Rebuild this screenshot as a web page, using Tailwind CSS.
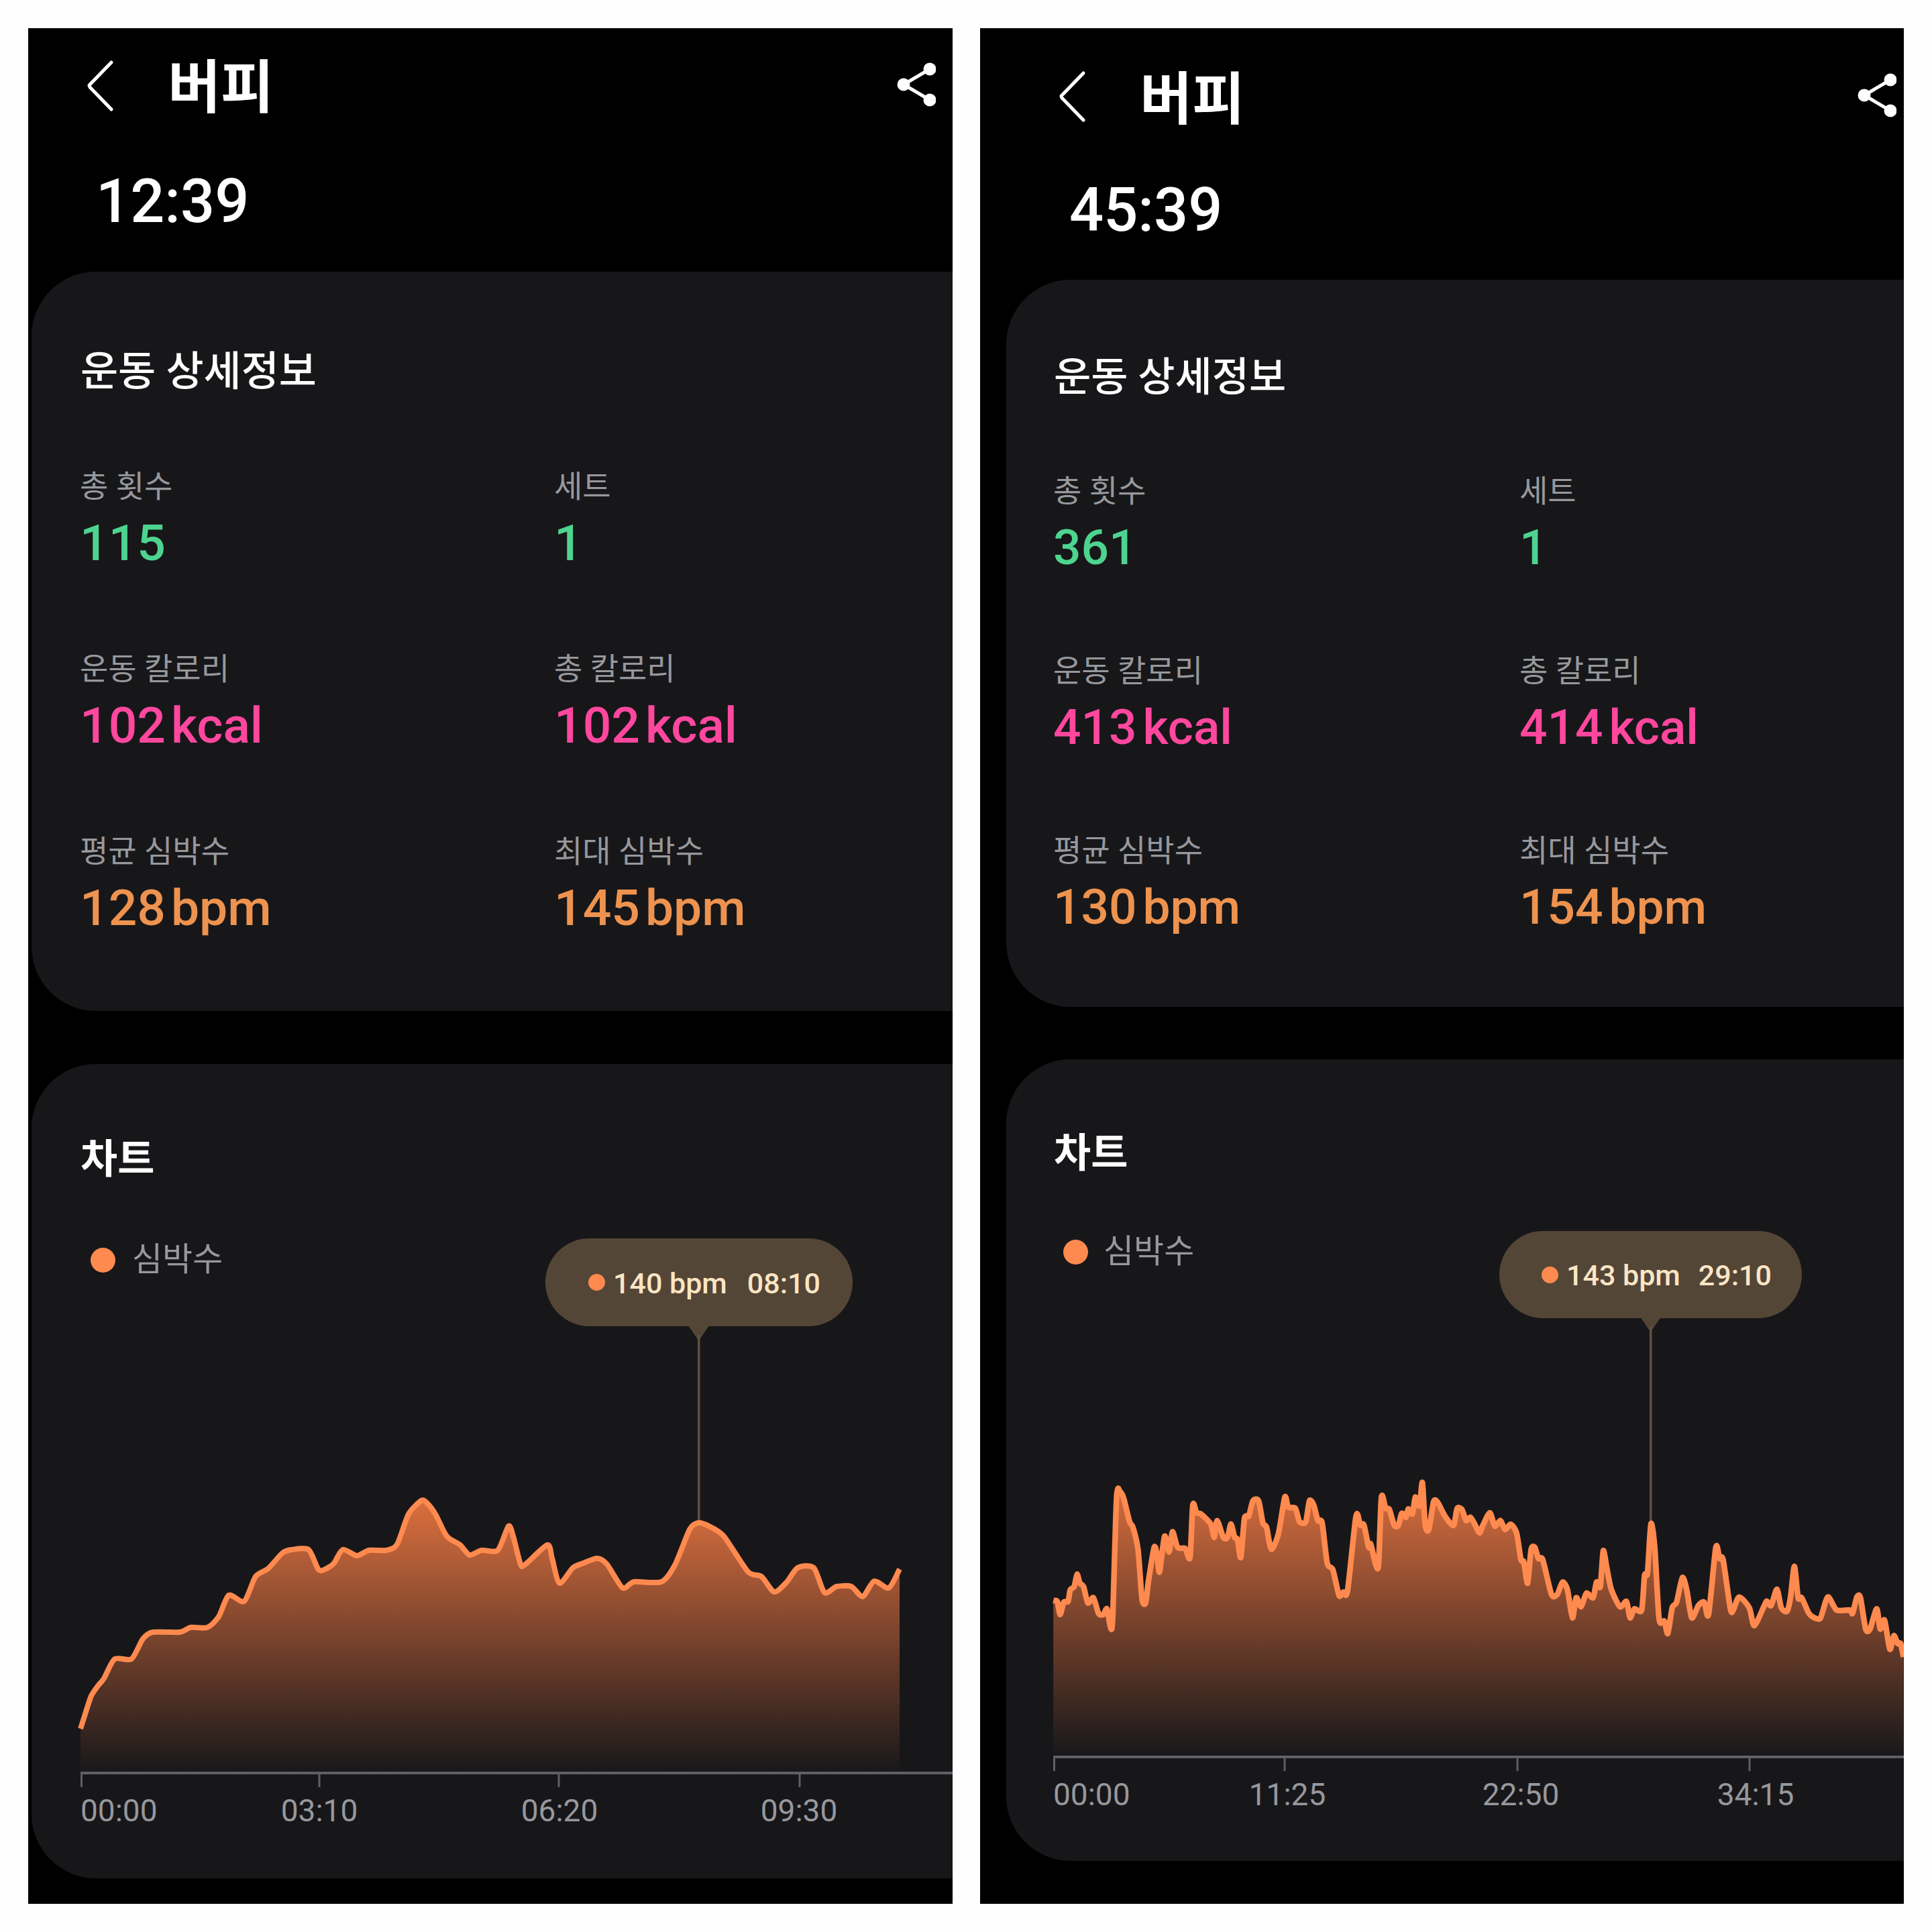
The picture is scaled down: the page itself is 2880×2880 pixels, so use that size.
<!DOCTYPE html>
<html lang="ko">
<head>
  <meta charset="UTF-8">
  <title>버피</title>
  <script src="https://cdn.jsdelivr.net/npm/@tailwindcss/browser@4"></script>
</head>
<body class="w-[2880px] h-[2880px] bg-[#fefefe] font-['Roboto','Noto_Sans_CJK_KR',sans-serif] flex pt-[42px] pl-[42px]">

  <!-- left screen -->
  <div class="w-[1378px] h-[2796px] bg-black overflow-hidden flex flex-col text-white">
    <div class="h-[180px] flex items-center pl-[88px] pr-[25px]">
      <svg class="w-[40px] h-[76px] mb-[8px]" viewBox="0 0 40 76" fill="none" stroke="white" stroke-width="5" stroke-linecap="round" stroke-linejoin="round"><path d="M36 3 L3 37 Q3 38 4 40 L36 73"/></svg>
      <div class="ml-[80px] text-[86px] font-semibold leading-none">버피</div>
      <svg class="ml-auto w-[58px] h-[66px] mb-[12px]" viewBox="0 0 58 66" fill="white" stroke="white" stroke-width="5"><path d="M49 10 L10 33 L49 56" fill="none"/><circle cx="49" cy="10" r="7"/><circle cx="10" cy="33" r="7"/><circle cx="49" cy="56" r="7"/></svg>
    </div>
    <div class="pl-[101px] text-[90px] font-medium leading-[158px]">12:39</div>

    <div class="mt-[25px] ml-[5px] h-[1102px] shrink-0 bg-[#17171a] rounded-l-[96px] pt-[109px] pl-[73px]">
      <div class="text-[61px] font-medium leading-[80px]">운동 상세정보</div>
      <div class="mt-[101px] -ml-[1px] grid grid-cols-[707px_1fr] gap-y-[104px]">
        <div><div class="text-[46px] leading-[60px] text-[#97989c]">총 횟수</div><div class="text-[75px] font-medium leading-[108px] text-[#4dd48f]">115</div></div>
        <div><div class="text-[46px] leading-[60px] text-[#97989c]">세트</div><div class="text-[75px] font-medium leading-[108px] text-[#4dd48f]">1</div></div>
        <div><div class="text-[46px] leading-[60px] text-[#97989c]">운동 칼로리</div><div class="text-[75px] font-medium leading-[108px] text-[#ff479e] flex gap-[8px]"><span>102</span><span>kcal</span></div></div>
        <div><div class="text-[46px] leading-[60px] text-[#97989c]">총 칼로리</div><div class="text-[75px] font-medium leading-[108px] text-[#ff479e] flex gap-[8px]"><span>102</span><span>kcal</span></div></div>
        <div><div class="text-[46px] leading-[60px] text-[#97989c]">평균 심박수</div><div class="text-[75px] font-medium leading-[108px] text-[#ed934f] flex gap-[8px]"><span>128</span><span>bpm</span></div></div>
        <div><div class="text-[46px] leading-[60px] text-[#97989c]">최대 심박수</div><div class="text-[75px] font-medium leading-[108px] text-[#ed934f] flex gap-[8px]"><span>145</span><span>bpm</span></div></div>
      </div>
    </div>

    <div class="mt-[79px] ml-[5px] h-[1214px] shrink-0 bg-[#17171a] rounded-l-[96px] pt-[103px]">
      <div class="pl-[73px] text-[60px] font-semibold leading-[80px]">차트</div>
      <div class="mt-[78px] relative h-[953px]">
        <svg id="chartA" class="absolute inset-0 w-[1373px] h-[953px]" viewBox="47 1847 1373 953"></svg>
        <div class="relative top-[1px] flex items-center pl-[88px] gap-[25px] h-[60px]">
          <span class="w-[37px] h-[37px] rounded-full bg-[#ff8a4f]"></span>
          <span class="text-[49px] leading-[60px] text-[#97989c]">심박수</span>
        </div>
        <div class="absolute left-[766px] top-[-1px] w-[458px] h-[131px] rounded-full bg-[#544636] flex items-center pl-[64px] text-[43px] font-medium text-[#fbe5c5]">
          <span class="w-[25px] h-[25px] rounded-full bg-[#ff8a4f]"></span>
          <span class="ml-[12px] mt-[4px]">140 bpm</span>
          <span class="ml-[30px] mt-[4px]">08:10</span>
        </div>
        <span class="absolute left-[73px] top-[828px] text-[46px] leading-[48px] text-[#97989c]">00:00</span>
        <span class="absolute left-[429px] top-[828px] -translate-x-1/2 text-[46px] leading-[48px] text-[#97989c]">03:10</span>
        <span class="absolute left-[787px] top-[828px] -translate-x-1/2 text-[46px] leading-[48px] text-[#97989c]">06:20</span>
        <span class="absolute left-[1144px] top-[828px] -translate-x-1/2 text-[46px] leading-[48px] text-[#97989c]">09:30</span>
      </div>
    </div>
  </div>

  <!-- right screen -->
  <div class="ml-[41px] w-[1377px] h-[2796px] bg-black overflow-hidden flex flex-col text-white">
    <div class="h-[214px] flex items-center pl-[118px] pr-[11px]">
      <svg class="w-[40px] h-[76px] mb-[10px]" viewBox="0 0 40 76" fill="none" stroke="white" stroke-width="5" stroke-linecap="round" stroke-linejoin="round"><path d="M36 3 L3 37 Q3 38 4 40 L36 73"/></svg>
      <div class="ml-[80px] text-[85px] font-semibold leading-none">버피</div>
      <svg class="ml-auto w-[58px] h-[66px] mb-[15px]" viewBox="0 0 58 66" fill="white" stroke="white" stroke-width="5"><path d="M49 10 L10 33 L49 56" fill="none"/><circle cx="49" cy="10" r="7"/><circle cx="10" cy="33" r="7"/><circle cx="49" cy="56" r="7"/></svg>
    </div>
    <div class="pl-[133px] text-[90px] font-medium leading-[116px]">45:39</div>

    <div class="mt-[45px] ml-[39px] h-[1084px] shrink-0 bg-[#17171a] rounded-l-[96px] pt-[106px] pl-[71px]">
      <div class="text-[60px] font-medium leading-[80px]">운동 상세정보</div>
      <div class="mt-[99px] -ml-[1px] grid grid-cols-[695px_1fr] gap-y-[100px]">
        <div><div class="text-[46px] leading-[60px] text-[#97989c]">총 횟수</div><div class="text-[73px] font-medium leading-[108px] text-[#4dd48f]">361</div></div>
        <div><div class="text-[46px] leading-[60px] text-[#97989c]">세트</div><div class="text-[73px] font-medium leading-[108px] text-[#4dd48f]">1</div></div>
        <div><div class="text-[46px] leading-[60px] text-[#97989c]">운동 칼로리</div><div class="text-[73px] font-medium leading-[108px] text-[#ff479e] flex gap-[9px]"><span>413</span><span>kcal</span></div></div>
        <div><div class="text-[46px] leading-[60px] text-[#97989c]">총 칼로리</div><div class="text-[73px] font-medium leading-[108px] text-[#ff479e] flex gap-[9px]"><span>414</span><span>kcal</span></div></div>
        <div><div class="text-[46px] leading-[60px] text-[#97989c]">평균 심박수</div><div class="text-[73px] font-medium leading-[108px] text-[#ed934f] flex gap-[9px]"><span>130</span><span>bpm</span></div></div>
        <div><div class="text-[46px] leading-[60px] text-[#97989c]">최대 심박수</div><div class="text-[73px] font-medium leading-[108px] text-[#ed934f] flex gap-[9px]"><span>154</span><span>bpm</span></div></div>
      </div>
    </div>

    <div class="mt-[78px] ml-[39px] h-[1195px] shrink-0 bg-[#17171a] rounded-l-[96px] pt-[101px]">
      <div class="pl-[71px] text-[60px] font-semibold leading-[80px]">차트</div>
      <div class="mt-[75px] relative h-[939px]">
        <svg id="chartB" class="absolute inset-0 w-[1338px] h-[939px]" viewBox="1500 1835 1338 939"></svg>
        <div class="relative top-[1px] flex items-center pl-[85px] gap-[23px] h-[60px]">
          <span class="w-[37px] h-[37px] rounded-full bg-[#ff8a4f]"></span>
          <span class="text-[49px] leading-[60px] text-[#97989c]">심박수</span>
        </div>
        <div class="absolute left-[735px] top-[0px] w-[451px] h-[130px] rounded-full bg-[#544636] flex items-center pl-[63px] text-[43px] font-medium text-[#fbe5c5]">
          <span class="w-[25px] h-[25px] rounded-full bg-[#ff8a4f]"></span>
          <span class="ml-[12px] mt-[2px]">143 bpm</span>
          <span class="ml-[27px] mt-[2px]">29:10</span>
        </div>
        <span class="absolute left-[70px] top-[816px] text-[46px] leading-[48px] text-[#97989c]">00:00</span>
        <span class="absolute left-[419px] top-[816px] -translate-x-1/2 text-[46px] leading-[48px] text-[#97989c]">11:25</span>
        <span class="absolute left-[767px] top-[816px] -translate-x-1/2 text-[46px] leading-[48px] text-[#97989c]">22:50</span>
        <span class="absolute left-[1117px] top-[816px] -translate-x-1/2 text-[46px] leading-[48px] text-[#97989c]">34:15</span>
      </div>
    </div>
  </div>

  <script>
    // heart rate traces, read off the screenshots in page coordinates
    const traceA = [[120,2577],[127,2555],[136,2528],[146,2513],[155,2502],[171,2473],[196,2473],[213,2443],[228,2433],[268,2433],[284,2426],[309,2426],[326,2410],[341,2378],[364,2387],[381,2350],[400,2338],[421,2315],[435,2310],[460,2310],[475,2340],[487,2338],[498,2330],[511,2310],[532,2319],[550,2311],[576,2311],[592,2302],[609,2257],[628,2237],[636,2240],[649,2257],[666,2290],[686,2303],[700,2318],[718,2311],[742,2311],[758,2275],[765,2290],[776,2332],[783,2332],[816,2303],[823,2323],[834,2360],[854,2337],[870,2330],[890,2323],[905,2332],[928,2367],[945,2358],[986,2358],[1006,2333],[1028,2280],[1041,2270],[1057,2275],[1079,2290],[1115,2343],[1135,2350],[1154,2373],[1173,2358],[1189,2337],[1213,2337],[1229,2374],[1247,2365],[1269,2365],[1286,2380],[1303,2357],[1325,2367],[1341,2339]];

    const rawB1 = [[48,708],[62,712],[72,770],[85,715],[100,712],[108,660],[122,645],[132,590],[142,630],[155,645],[170,718],[190,695],[208,765],[225,770],[238,745],[250,825],[258,790],[272,245],[285,222],[297,250],[318,355],[330,380],[348,480],[362,700],[375,718],[385,620],[405,470],[415,500],[424,580],[442,420],[458,490],[470,400],[488,470],[515,475],[532,515],[542,280],[555,315],[570,320],[605,365],[618,425],[628,350],[650,425],[665,425],[677,365],[690,425],[700,435],[712,515],[725,340],[740,330],[755,262],[775,262],[790,360],[803,380],[820,478],[845,410],[868,245],[880,290],[905,295],[920,355],[942,355],[955,262],[970,280],[985,350],[1000,360],[1018,540],[1038,570],[1060,685],[1075,670],[1090,665],[1120,330],[1135,370],[1148,370],[1165,470],[1172,455],[1190,548],[1200,545],[1210,245],[1225,295],[1238,300],[1255,370],[1270,372],[1282,318],[1297,335],[1305,298],[1320,320],[1330,245],[1345,285],[1355,180],[1365,370],[1378,390],[1395,265],[1410,270],[1435,330],[1465,372],[1478,297],[1495,300],[1510,350],[1525,335],[1540,365],[1557,405]];
    const rawB2 = [[23,375],[48,315],[65,375],[85,350],[100,390],[120,367],[140,405],[155,525],[165,535],[178,630],[190,480],[203,470],[215,520],[230,525],[260,680],[280,680],[298,625],[315,660],[332,785],[345,695],[362,735],[380,675],[403,695],[415,625],[428,645],[438,485],[450,560],[465,655],[495,735],[518,712],[530,785],[545,745],[570,750],[580,595],[590,585],[602,365],[615,470],[630,790],[648,800],[660,855],[675,740],[690,715],[710,605],[725,660],[742,785],[765,730],[785,715],[800,770],[825,470],[838,520],[850,525],[875,745],[885,750],[905,692],[940,740],[957,820],[990,735],[1000,710],[1015,730],[1035,657],[1050,740],[1070,755],[1082,690],[1095,555],[1108,695],[1120,695],[1145,765],[1165,785],[1185,785],[1210,692],[1240,750],[1285,750],[1295,765],[1310,692],[1322,695],[1340,835],[1355,835],[1378,745],[1390,835],[1405,795],[1423,925],[1437,865],[1450,900],[1460,900],[1470,960]];
    const traceB = [
      ...rawB1.map(([x, y]) => [1550 + x / 2.376, 2150 + y / 3]),
      ...rawB2.map(([x, y]) => [2200 + x / 2.306, 2150 + y / 3])
    ];

    function smooth(pts) {
      let d = `M${pts[0][0]} ${pts[0][1]}`;
      for (let i = 0; i < pts.length - 1; i++) {
        const p0 = pts[i - 1] || pts[i], p1 = pts[i], p2 = pts[i + 1], p3 = pts[i + 2] || p2;
        const c1 = [p1[0] + (p2[0] - p0[0]) / 8, p1[1] + (p2[1] - p0[1]) / 8];
        const c2 = [p2[0] - (p3[0] - p1[0]) / 8, p2[1] - (p3[1] - p1[1]) / 8];
        d += ` C${c1[0]} ${c1[1]} ${c2[0]} ${c2[1]} ${p2[0]} ${p2[1]}`;
      }
      return d;
    }

    function drawChart(id, c) {
      const line = smooth(c.trace);
      const first = c.trace[0][0], last = c.trace[c.trace.length - 1][0];
      const ticks = c.ticks.map(x => `<rect x="${x - 1.5}" y="${c.axisY}" width="3" height="21" fill="#5f6063"/>`).join('');
      document.getElementById(id).innerHTML = `
        <defs><linearGradient id="${id}Fill" gradientUnits="userSpaceOnUse" x1="0" y1="${c.top}" x2="0" y2="${c.bottom}">
          <stop offset="0" stop-color="#ff7f45" stop-opacity="0.85"/>
          <stop offset="1" stop-color="#ff7f45" stop-opacity="0.01"/>
        </linearGradient></defs>
        <path d="${c.arrow}" fill="#544636"/>
        <rect x="${c.pin - 1.5}" y="${c.pinTop}" width="3.5" height="${c.pinBottom - c.pinTop}" fill="#5e5040"/>
        <path d="${line} L${last} ${c.bottom} L${first} ${c.bottom} Z" fill="url(#${id}Fill)"/>
        <path d="${line}" fill="none" stroke="#ff8a4f" stroke-width="${c.stroke}" stroke-linejoin="round"/>
        <rect x="${first}" y="${c.axisY - 2}" width="${c.axisEnd - first}" height="4" fill="#5f6063"/>
        ${ticks}`;
    }

    drawChart('chartA', {
      trace: traceA, stroke: 8, top: 2235, bottom: 2640, axisY: 2643, axisEnd: 1420,
      ticks: [121.5, 476, 833, 1192], pin: 1041.5, pinTop: 1990, pinBottom: 2272,
      arrow: 'M1026 1976 L1057 1976 L1044 1995 Q1041.5 1998 1039 1995 Z'
    });
    drawChart('chartB', {
      trace: traceB, stroke: 8.5, top: 2205, bottom: 2615, axisY: 2619, axisEnd: 2838,
      ticks: [1571.5, 1915, 2262, 2608], pin: 2460.5, pinTop: 1978, pinBottom: 2272,
      arrow: 'M2445 1963 L2476 1963 L2463 1982 Q2460.5 1985 2458 1982 Z'
    });
  </script>
</body>
</html>
